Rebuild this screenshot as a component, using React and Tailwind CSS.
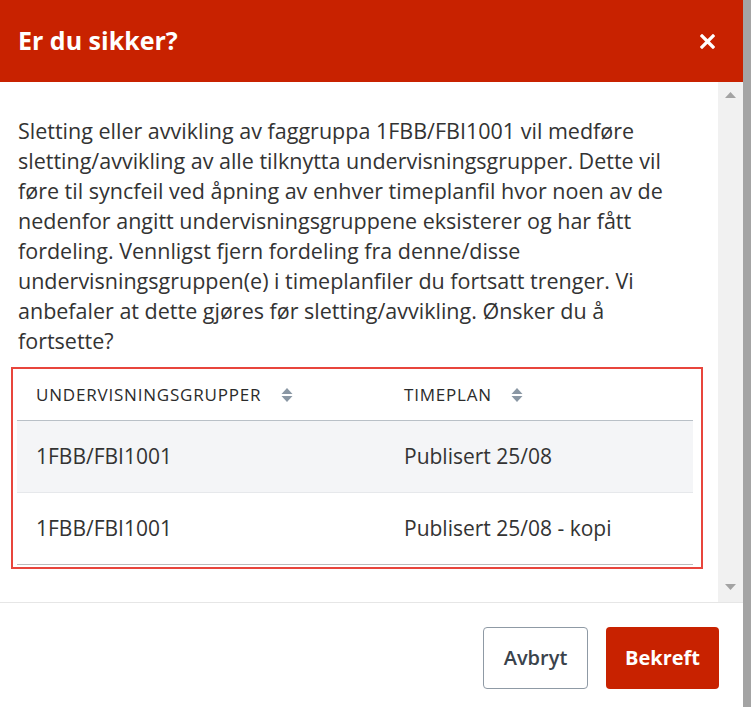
const rows = [
  { group: "1FBB/FBI1001", plan: "Publisert 25/08" },
  { group: "1FBB/FBI1001", plan: "Publisert 25/08 - kopi" },
];

function SortIcon() {
  return (
    <svg width="12" height="16" viewBox="0 0 12 16" className="shrink-0">
      <path d="M6 1 L11.5 7 L0.5 7 Z" fill="#8a97a4" />
      <path d="M6 15 L11.5 9 L0.5 9 Z" fill="#8a97a4" />
    </svg>
  );
}

function Scrollbar() {
  return (
    <div className="flex w-[25px] shrink-0 flex-col items-center justify-between bg-[#f1f1f1] pt-[10px] pb-[12px]">
      <svg width="11" height="6" viewBox="0 0 11 6"><path d="M5.5 0 L11 6 L0 6 Z" fill="#a3a3a3" /></svg>
      <svg width="11" height="6" viewBox="0 0 11 6"><path d="M0 0 L11 0 L5.5 6 Z" fill="#a3a3a3" /></svg>
    </div>
  );
}

export default function App() {
  return (
    <div className="flex h-[707px] w-[751px] overflow-hidden bg-[#a4a4a4] font-['Open_Sans',sans-serif]">
      <div className="flex w-[743px] shrink-0 flex-col bg-white">
        <div className="flex h-[82px] shrink-0 items-center justify-between bg-[#c82200] pl-[18px] pr-[28px]">
          <h1 className="text-[25px] font-bold text-white">Er du sikker?</h1>
          <svg width="15" height="15" viewBox="0 0 15 15">
            <path d="M2 2 L13 13 M13 2 L2 13" stroke="white" strokeWidth="3.2" strokeLinecap="square" />
          </svg>
        </div>

        <div className="flex h-[520px] shrink-0">
          <div className="flex-1 pl-[11px] pt-[34px]">
            <p className="ml-[7px] w-[684px] text-[21.5px] leading-[30px] text-[#333]">
              Sletting eller avvikling av faggruppa 1FBB/FBI1001 vil medføre sletting/avvikling av alle tilknytta undervisningsgrupper. Dette vil føre til syncfeil ved åpning av enhver timeplanfil hvor noen av de nedenfor angitt undervisningsgruppene eksisterer og har fått fordeling. Vennligst fjern fordeling fra denne/disse undervisningsgruppen(e) i timeplanfiler du fortsatt trenger. Vi anbefaler at dette gjøres før sletting/avvikling. Ønsker du å fortsette?
            </p>
            <div className="mt-[11px] w-[692px] border-2 border-[#e8453c] pb-[2px] pl-[4px] pr-[8px]">
              <div className="flex h-[52px] items-center border-b border-[#b9c0c7] text-[17px] tracking-[0.8px] text-[#2b2b2b]">
                <div className="flex w-[368px] items-center gap-[20px] pl-[19px]">
                  UNDERVISNINGSGRUPPER <SortIcon />
                </div>
                <div className="flex items-center gap-[19px] pl-[19px]">
                  TIMEPLAN <SortIcon />
                </div>
              </div>
              {rows.map((r, i) => (
                <div
                  key={i}
                  className={`flex h-[72px] items-center text-[21px] text-[#333] ${i === 0 ? "border-b border-[#e6e8eb] bg-[#f4f5f7]" : "border-b border-[#bcbcbc]"}`}
                >
                  <div className="w-[368px] pl-[19px]">{r.group}</div>
                  <div className="pl-[19px]">{r.plan}</div>
                </div>
              ))}
            </div>
          </div>
          <Scrollbar />
        </div>

        <div className="flex flex-1 items-start justify-end gap-[18px] border-t border-[#e6e6e6] pr-[24px] pt-[24px]">
          <button className="h-[62px] w-[105px] rounded-[4px] border border-[#8f9aa5] text-[20px] font-semibold text-[#3a434c]">
            Avbryt
          </button>
          <button className="h-[62px] w-[113px] rounded-[4px] bg-[#c82200] text-[20px] font-bold text-white">
            Bekreft
          </button>
        </div>
      </div>
    </div>
  );
}
